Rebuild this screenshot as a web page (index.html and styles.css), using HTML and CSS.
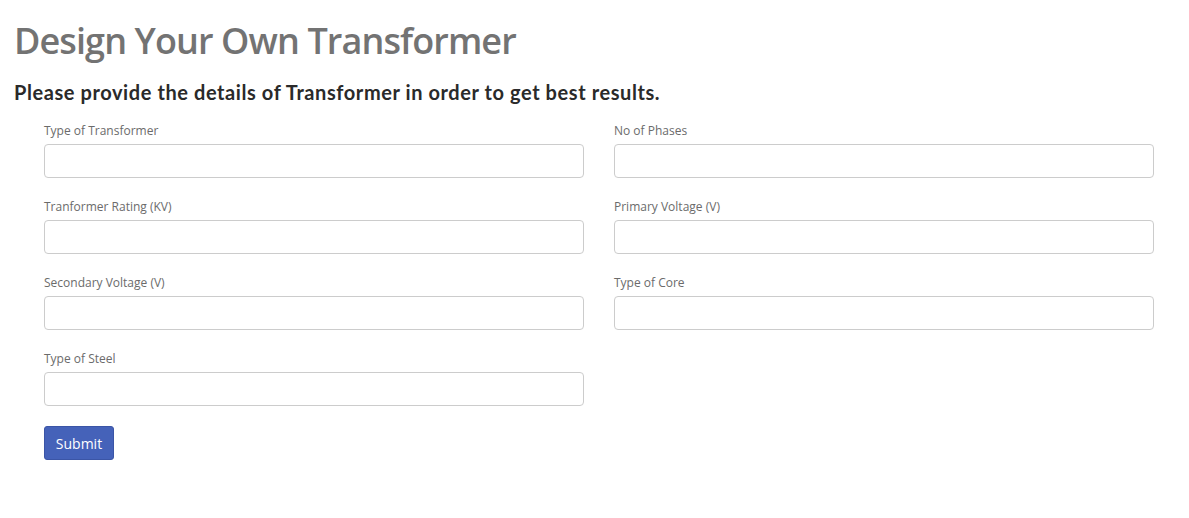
FILE: index.html
```html
<!DOCTYPE html>
<html>
<head>
<meta charset="utf-8">
<link rel="stylesheet" href="styles.css">
</head>
<body>
<div class="page">
  <h1 class="title">Design Your Own Transformer</h1>
  <h2 class="subtitle">Please provide the details of Transformer in order to get best results.</h2>
  <form class="form">
    <div class="grid">
      <div class="field"><label>Type of Transformer</label><input type="text"></div>
      <div class="field"><label>No of Phases</label><input type="text"></div>
      <div class="field"><label>Tranformer Rating (KV)</label><input type="text"></div>
      <div class="field"><label>Primary Voltage (V)</label><input type="text"></div>
      <div class="field"><label>Secondary Voltage (V)</label><input type="text"></div>
      <div class="field"><label>Type of Core</label><input type="text"></div>
      <div class="field"><label>Type of Steel</label><input type="text"></div>
    </div>
    <button type="button" class="submit">Submit</button>
  </form>
</div>
</body>
</html>
```
FILE: styles.css
```css
html, body { margin: 0; padding: 0; background: #fff; }
.page { padding: 0 14px; }
.title {
  margin: 0;
  padding-top: 20px;
  font-family: "Open Sans", sans-serif;
  font-weight: 600;
  font-size: 36px;
  line-height: 42px;
  letter-spacing: -0.9px;
  color: #737373;
}
.subtitle {
  margin: 17px 0 0 0;
  font-family: "Lato", sans-serif;
  font-weight: 700;
  font-size: 20px;
  line-height: 26px;
  letter-spacing: 0.58px;
  color: #2a2a2a;
}
.form { padding: 17px 30px 0 30px; }
.grid {
  display: grid;
  grid-template-columns: 540px 540px;
  column-gap: 30px;
  row-gap: 20px;
}
.field { display: flex; flex-direction: column; }
.field label {
  font-family: "Open Sans", sans-serif;
  font-size: 12px;
  line-height: 18px;
  color: #6b6b6b;
  margin-bottom: 4px;
}
.field input {
  box-sizing: border-box;
  height: 34px;
  border: 1px solid #cccccc;
  border-radius: 4px;
  padding: 6px 12px;
  font-size: 14px;
}
.submit {
  margin-top: 20px;
  width: 70px;
  height: 34px;
  background: #4562b9;
  border: 1px solid #3b55a6;
  border-radius: 3px;
  color: #fff;
  font-family: "Open Sans", sans-serif;
  font-size: 14px;
  padding: 0;
}
```
